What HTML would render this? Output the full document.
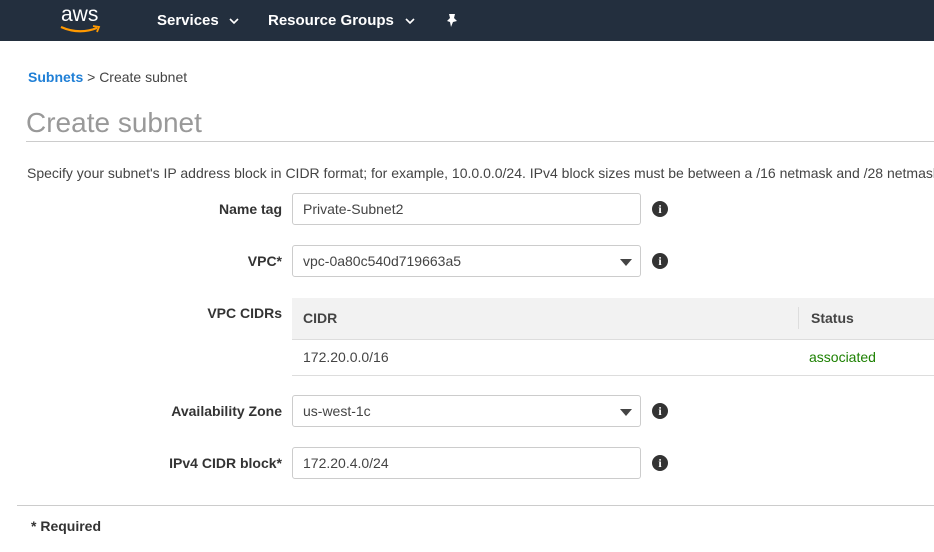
<!DOCTYPE html>
<html><head><style>
body{margin:0;width:934px;height:552px;overflow:hidden;background:#fff;font-family:"Liberation Sans",Arial,sans-serif;position:relative}
.a{position:absolute}
.nav{left:0;top:0;width:934px;height:41px;background:#232f3e}
.nt{color:#fff;font-weight:bold;font-size:15px;top:12px}
.lbl{font-size:14px;font-weight:bold;color:#333;text-align:right;right:652px;white-space:nowrap}
.inp{left:292px;font-size:14px;color:#444;line-height:30px;padding-left:10px;border:1px solid #ccc;border-radius:3px;box-sizing:border-box;width:349px;height:32px}
.tri{position:absolute;right:8px;top:13px;width:0;height:0;border-left:6px solid transparent;border-right:6px solid transparent;border-top:7px solid #444}
.info{left:652px;width:16px;height:16px;border-radius:50%;background:#333;color:#fff;font:bold 12px "Liberation Serif",serif;text-align:center;line-height:16px}
</style></head><body>
<div class="a nav"></div>
<div class="a" style="left:61px;top:3px;color:#fff;font-size:21px;">aws</div>
<svg class="a" style="left:59px;top:25px" width="44" height="10"><path d="M2 2 Q20 10 38 3" stroke="#f90" stroke-width="2.2" fill="none"/><path d="M34 1 L40 2 L38 7" stroke="#f90" stroke-width="1.8" fill="none"/></svg>
<div class="a nt" style="left:157px">Services</div>
<svg class="a" style="left:229px;top:18px" width="10" height="7"><path d="M1 1 L5 5 L9 1" stroke="#fff" stroke-width="1.6" fill="none"/></svg>
<div class="a nt" style="left:268px">Resource Groups</div>
<svg class="a" style="left:405px;top:18px" width="10" height="7"><path d="M1 1 L5 5 L9 1" stroke="#fff" stroke-width="1.6" fill="none"/></svg>
<svg class="a" style="left:445px;top:13px" width="14" height="16"><path d="M4 1 L10 1 L9 5 L12 8 L8 9 L6 14 L5 9 L2 8 L5 5 Z" fill="#fff"/></svg>
<div class="a" style="left:28px;top:69px;font-size:14px;color:#444"><b style="color:#1f7fd6">Subnets</b> &gt; Create subnet</div>
<div class="a" style="left:26px;top:107px;font-size:28px;color:#999">Create subnet</div>
<div class="a" style="left:26px;top:141px;width:908px;height:1px;background:#ccc"></div>
<div class="a" style="left:27px;top:165px;font-size:14px;color:#444;white-space:nowrap">Specify your subnet's IP address block in CIDR format; for example, 10.0.0.0/24. IPv4 block sizes must be between a /16 netmask and /28 netmask.</div>
<div class="a lbl" style="top:201px">Name tag</div>
<div class="a inp" style="top:193px">Private-Subnet2</div>
<div class="a info" style="top:201px">i</div>
<div class="a lbl" style="top:253px">VPC*</div>
<div class="a inp" style="top:245px">vpc-0a80c540d719663a5<span class="tri"></span></div>
<div class="a info" style="top:253px">i</div>
<div class="a lbl" style="top:305px">VPC CIDRs</div>
<div class="a" style="left:292px;top:298px;width:642px;height:41px;background:#f2f2f2;border-bottom:1px solid #ddd"></div>
<div class="a" style="left:798px;top:307px;width:1px;height:22px;background:#ddd"></div>
<div class="a" style="left:303px;top:310px;font-size:14px;font-weight:bold;color:#444">CIDR</div>
<div class="a" style="left:811px;top:310px;font-size:14px;font-weight:bold;color:#444">Status</div>
<div class="a" style="left:303px;top:349px;font-size:14px;color:#444">172.20.0.0/16</div>
<div class="a" style="left:809px;top:349px;font-size:14px;color:#1d8102">associated</div>
<div class="a" style="left:292px;top:375px;width:642px;height:1px;background:#ddd"></div>
<div class="a lbl" style="top:403px">Availability Zone</div>
<div class="a inp" style="top:395px">us-west-1c<span class="tri"></span></div>
<div class="a info" style="top:403px">i</div>
<div class="a lbl" style="top:455px">IPv4 CIDR block*</div>
<div class="a inp" style="top:447px">172.20.4.0/24</div>
<div class="a info" style="top:455px">i</div>
<div class="a" style="left:17px;top:505px;width:917px;height:1px;background:#ccc"></div>
<div class="a" style="left:31px;top:518px;font-size:14px;font-weight:bold;color:#333">* Required</div>
</body></html>
